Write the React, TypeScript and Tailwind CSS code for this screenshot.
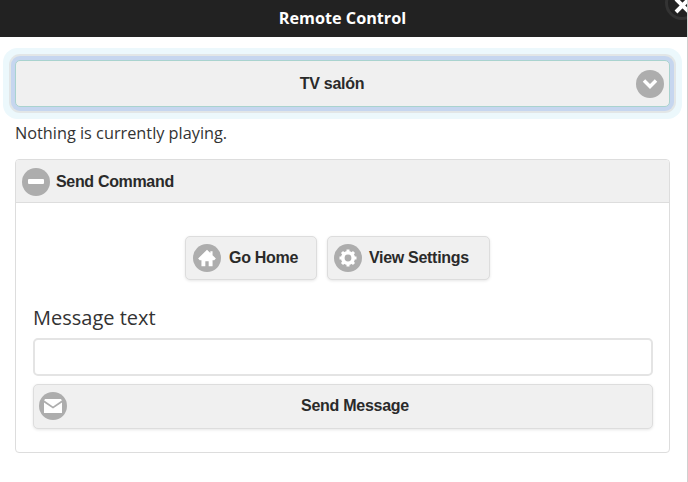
import type { ReactNode } from "react";

const IconDisc = ({ children }: { children: ReactNode }) => (
	<span className="flex h-[28px] w-[28px] shrink-0 items-center justify-center rounded-full bg-[#adadad]">
		{children}
	</span>
);

const HomeIcon = () => (
	<svg width="20" height="20" viewBox="0 0 18 18" fill="#fff">
		<path d="M9 1.5 1 9.5 2.5 11H4v5.5h3.5V12h3v4.5H14V11h1.5L17 9.5 14 6.5V3h-2v1.5Z" />
	</svg>
);

const GearIcon = () => (
	<svg width="20" height="20" viewBox="0 0 20 20">
		<circle cx="10" cy="10" r="5.2" fill="none" stroke="#fff" strokeWidth="3.6" />
		<path
			d="M10 1.5v3M10 15.5v3M1.5 10h3M15.5 10h3M4 4l2.1 2.1M13.9 13.9 16 16M16 4l-2.1 2.1M6.1 13.9 4 16"
			stroke="#fff"
			strokeWidth="3"
		/>
	</svg>
);

const MailIcon = () => (
	<svg width="18" height="14" viewBox="0 0 18 14" fill="#fff">
		<path d="M0 1.2 1.2 0h15.6L18 1.2 9 7.5Z" />
		<path d="M0 3.4 9 9.6l9-6.2V14H0Z" />
	</svg>
);

const App = () => {
	return (
		<div className="relative h-[482px] w-[688px] overflow-hidden border-r border-[#d0d0d0] bg-white font-['Open_Sans',sans-serif] text-[#333]">
			<header className="flex h-[37px] items-center justify-center bg-[#222] pr-[2px] text-[16.2px] font-bold text-white">
				Remote Control
			</header>
			<span className="absolute -top-[14px] -right-[12px] flex h-[34px] w-[34px] items-center justify-center rounded-full border-[3px] border-[#333] bg-[#222]">
				<svg className="mt-[4px]" width="17" height="17" viewBox="0 0 17 17" stroke="#fff" strokeWidth="4">
					<path d="M2 2l13 13M15 2 2 15" />
				</svg>
			</span>

			<main className="pt-[23px] pr-[17px] pl-[15px]">
				<button className="relative flex h-[47px] w-full items-center justify-center rounded-[5px] border border-[#a9d3cf] bg-[#f0f0f0] pr-[21px] font-['Liberation_Sans',sans-serif] text-[16px] font-bold tracking-[-0.3px] text-[#2a2a2a] shadow-[0_0_0_4px_#c6d6ef,0_0_0_6px_#e2e6e7,0_0_0_12px_#ecf8fc]">
					TV salón
					<span className="absolute right-[5px] flex h-[28px] w-[28px] items-center justify-center rounded-full bg-[#adadad]">
						<svg width="16" height="12" viewBox="0 0 16 12" fill="none" stroke="#fff" strokeWidth="3.5">
							<path d="M2 2.5l6 6 6-6" />
						</svg>
					</span>
				</button>

				<p className="mt-[15px] text-[16.3px] leading-[22px]">Nothing is currently playing.</p>

				<section className="mt-[15px] h-[294px] overflow-hidden rounded-[4px] border border-[#ddd]">
					<div className="flex h-[43px] items-center gap-[6px] border-b border-[#ddd] bg-[#f0f0f0] pt-[1px] pl-[6px] font-['Liberation_Sans',sans-serif] text-[16px] font-bold tracking-[-0.33px] text-[#2a2a2a]">
						<IconDisc>
							<span className="h-[5px] w-[16px] rounded-[1px] bg-white" />
						</IconDisc>
						Send Command
					</div>

					<div className="pt-[33px] pr-[16px] pl-[17px]">
						<div className="flex justify-center gap-[10px] pr-[11px] font-['Liberation_Sans',sans-serif] text-[16px] font-bold tracking-[-0.3px] text-[#2a2a2a]">
							<button className="flex h-[44px] w-[132px] items-center gap-[8px] rounded-[5px] border border-[#ddd] bg-[#f0f0f0] pb-[1px] pl-[7px] shadow-[0_1px_3px_rgba(0,0,0,0.1)]">
								<IconDisc>
									<HomeIcon />
								</IconDisc>
								Go Home
							</button>
							<button className="flex h-[44px] w-[163px] items-center gap-[7px] rounded-[5px] border border-[#ddd] bg-[#f0f0f0] pb-[1px] pl-[6px] shadow-[0_1px_3px_rgba(0,0,0,0.1)]">
								<IconDisc>
									<GearIcon />
								</IconDisc>
								View Settings
							</button>
						</div>

						<label className="mt-[23px] block text-[20px] leading-[30px]">Message text</label>
						<input className="mt-[5px] block h-[38px] w-full rounded-[5px] border-2 border-[#e4e4e4] bg-white outline-none" />
						<button className="relative mt-[8px] flex h-[45px] w-full items-center justify-center rounded-[5px] border border-[#ddd] bg-[#f0f0f0] pb-[1px] pl-[24px] font-['Liberation_Sans',sans-serif] text-[16px] font-bold tracking-[-0.27px] text-[#2a2a2a] shadow-[0_1px_3px_rgba(0,0,0,0.1)]">
							<span className="absolute left-[5px]">
								<IconDisc>
									<MailIcon />
								</IconDisc>
							</span>
							Send Message
						</button>
					</div>
				</section>
			</main>
		</div>
	);
};

export default App;
